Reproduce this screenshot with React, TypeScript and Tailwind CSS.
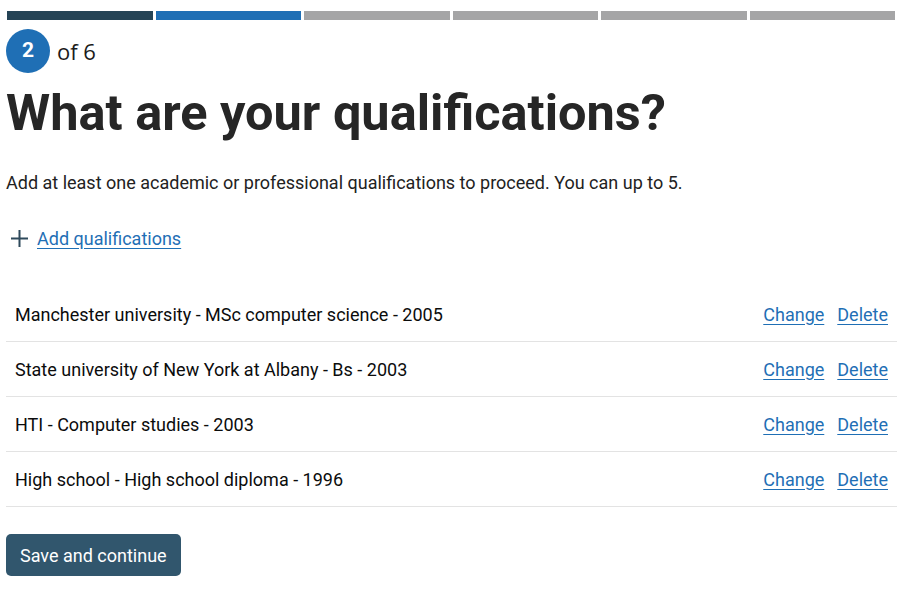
import React from "react";

const steps = ["done", "current", "todo", "todo", "todo", "todo"];

const qualifications = [
  "Manchester university - MSc computer science - 2005",
  "State university of New York at Albany - Bs - 2003",
  "HTI - Computer studies - 2003",
  "High school - High school diploma - 1996",
];

export default function App() {
  return (
    <div className="min-h-screen bg-white text-[#0b0c0c] font-['Roboto','Liberation_Sans',sans-serif]">
      <div className="w-[897px] pl-[6px] pt-[11px]">
        {/* step progress */}
        <div className="flex gap-[3px] pl-[1px] pr-[2px]">
          {steps.map((s, i) => (
            <div
              key={i}
              className={
                s === "done"
                  ? "h-[9px] flex-1 bg-[#254456]"
                  : s === "current"
                  ? "h-[9px] flex-1 bg-[#1f6fb5]"
                  : "h-[9px] flex-1 bg-[#a5a5a6]"
              }
            />
          ))}
        </div>

        <div className="mt-[9px] flex items-center gap-[7px]">
          <div className="flex h-[44px] w-[44px] items-center justify-center rounded-full bg-[#1f6fb5] text-[21px] font-bold text-white">
            2
          </div>
          <span className="font-['Open_Sans',sans-serif] text-[22px] text-[#1b1b1b]">of 6</span>
        </div>

        <h1 className="mt-[9px] text-[50.5px] font-bold leading-[62px] text-[#262626]">
          What are your qualifications?
        </h1>

        <p className="mt-[27px] text-[18px] leading-[24px] text-[#222]">
          Add at least one academic or professional qualifications to proceed. You can up to 5.
        </p>

        {/* add link */}
        <div className="mt-[30px] flex items-center gap-[8px] pl-[4px]">
          <svg width="19" height="19" viewBox="0 0 19 19" className="text-[#2f4a5c]">
            <path d="M9.5 1v17M1 9.5h17" stroke="currentColor" strokeWidth="2" />
          </svg>
          <a href="#" className="text-[18px] text-[#1f6fb5] underline underline-offset-[3px]">
            Add qualifications
          </a>
        </div>

        {/* qualification list */}
        <div className="mt-[35px]">
          {qualifications.map((q, i) => (
            <div
              key={i}
              className="flex h-[55px] items-center justify-between border-b border-[#e3e3e3] pl-[9px] pr-[9px]"
            >
              <span className="text-[18px] text-[#0b0c0c]">{q}</span>
              <div className="flex gap-[13px] text-[18px] text-[#1f6fb5]">
                <a href="#" className="underline underline-offset-[3px]">Change</a>
                <a href="#" className="underline underline-offset-[3px]">Delete</a>
              </div>
            </div>
          ))}
        </div>

        <button className="mt-[27px] h-[42px] rounded-[5px] bg-[#31566d] px-[14px] text-[18px] text-white">
          Save and continue
        </button>
      </div>
    </div>
  );
}
